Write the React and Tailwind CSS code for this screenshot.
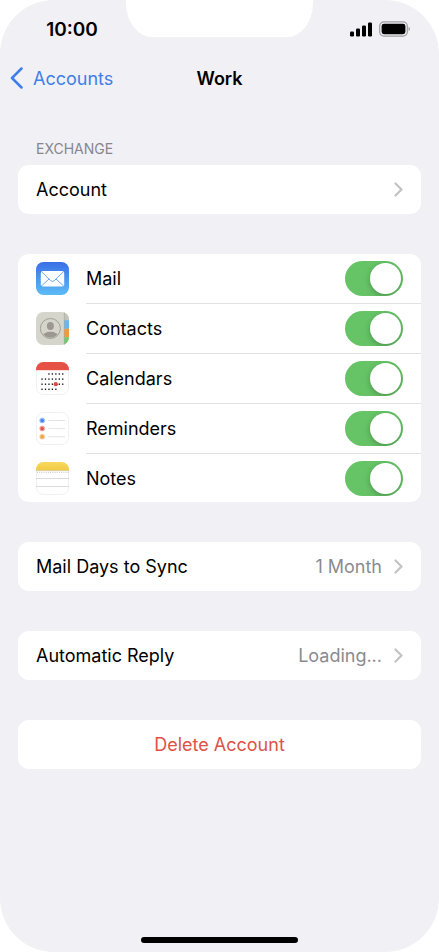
import { useState } from "react";

const services = [
  { id: "mail", label: "Mail", Icon: MailIcon },
  { id: "contacts", label: "Contacts", Icon: ContactsIcon },
  { id: "calendars", label: "Calendars", Icon: CalendarIcon },
  { id: "reminders", label: "Reminders", Icon: RemindersIcon },
  { id: "notes", label: "Notes", Icon: NotesIcon },
];

export default function App() {
  const [enabled, setEnabled] = useState({
    mail: true,
    contacts: true,
    calendars: true,
    reminders: true,
    notes: true,
  });

  const toggle = (id) => setEnabled((prev) => ({ ...prev, [id]: !prev[id] }));

  return (
    <div className="min-h-screen bg-white font-['Inter','Liberation_Sans',sans-serif] text-black">
      <div className="min-h-screen flex flex-col overflow-hidden rounded-[54px] bg-[#f1f0f5]">
        <StatusBar />

        <header className="mt-4 grid grid-cols-[1fr_auto_1fr] items-center px-[10px] h-12">
          <a href="#accounts" className="flex items-center gap-[10px] text-[18px] text-[#3f7fe8]">
            <svg viewBox="0 0 13 22" className="h-[22px] w-[13px]" fill="none" stroke="currentColor" strokeWidth="2.5" strokeLinecap="round" strokeLinejoin="round">
              <path d="M11.5 1.5 2 11l9.5 9.5" />
            </svg>
            Accounts
          </a>
          <h1 className="text-[18px] font-semibold">Work</h1>
        </header>

        <main className="flex flex-col gap-10 px-[18px] pt-[37px]">
          <section>
            <h2 className="mb-[6px] px-[18px] text-[14px] leading-5 text-[#86868b]">EXCHANGE</h2>
            <LinkRow label="Account" />
          </section>

          <ul className="overflow-hidden rounded-[11px] bg-white pl-[18px]">
            {services.map(({ id, label, Icon }) => (
              <li key={id} className="group flex gap-[17px]">
                <div className="shrink-0 pt-2">
                  <Icon />
                </div>
                <div className="flex h-[50px] flex-1 items-center justify-between border-b border-[#e2e2e5] pr-[18px] group-last:h-12 group-last:border-b-0">
                  <label htmlFor={id} className="flex-1 text-[18px]">{label}</label>
                  <Switch id={id} checked={enabled[id]} onChange={() => toggle(id)} />
                </div>
              </li>
            ))}
          </ul>

          <LinkRow label="Mail Days to Sync" value="1 Month" />
          <LinkRow label="Automatic Reply" value="Loading..." />

          <button type="button" className="h-[49px] w-full rounded-[11px] bg-white text-[18px] text-[#de5246]">
            Delete Account
          </button>
        </main>

        <div className="mx-auto mt-auto mb-[9px] h-[6px] w-[157px] rounded-full bg-black" />
      </div>
    </div>
  );
}

function StatusBar() {
  return (
    <div className="grid grid-cols-[1fr_187px_1fr]">
      <div className="flex items-center justify-center pt-[22px] pl-[18px] text-[19px] leading-4 font-semibold">10:00</div>
      <div className="h-[37px] rounded-[0_0_26px_26px/0_0_34px_34px] bg-white" />
      <div className="flex items-center justify-center gap-[6px] pt-5 pl-2">
        <svg viewBox="0 0 23 15" className="h-[15px] w-[23px]">
          <rect x="0" y="9.5" width="4" height="5" rx="1.2" />
          <rect x="6" y="6.5" width="4" height="8" rx="1.2" />
          <rect x="12" y="3.5" width="4" height="11" rx="1.2" />
          <rect x="18" y="0.5" width="4" height="14" rx="1.2" />
        </svg>
        <svg viewBox="0 0 32 16" className="h-4 w-8">
          <rect x="0.7" y="0.9" width="27.6" height="14.2" rx="4.2" fill="none" stroke="#9c9ca1" strokeWidth="1.2" />
          <rect x="2.6" y="2.8" width="23.8" height="10.4" rx="2.4" />
          <path d="M29.6 5.8c1.6.8 1.6 3.6 0 4.4z" fill="#8e8e93" />
        </svg>
      </div>
    </div>
  );
}

function LinkRow({ label, value }) {
  return (
    <a href="#details" className="flex h-[49px] items-center rounded-[11px] bg-white px-[18px] text-[18px]">
      <span className="flex-1">{label}</span>
      {value && <span className="text-[#8b8b8f]">{value}</span>}
      <svg viewBox="0 0 9 15" className="ml-3 h-[15px] w-[9px]" fill="none" stroke="#c3c3c6" strokeWidth="2.2" strokeLinecap="round" strokeLinejoin="round">
        <path d="M1.5 1.5 7.5 7.5l-6 6" />
      </svg>
    </a>
  );
}

function Switch({ id, checked, onChange }) {
  return (
    <input
      id={id}
      type="checkbox"
      role="switch"
      checked={checked}
      onChange={onChange}
      className="flex h-[35px] w-[58px] cursor-pointer appearance-none items-center overflow-hidden rounded-full bg-[#e9e9eb] p-[2px] before:h-[31px] before:w-[31px] before:rounded-full before:bg-white before:shadow-[0_2px_6px_rgba(0,0,0,0.25)] before:content-[''] checked:justify-end checked:bg-[#66c466]"
    />
  );
}

function MailIcon() {
  return (
    <svg viewBox="0 0 33 33" className="h-[33px] w-[33px]">
      <defs>
        <linearGradient id="mail-bg" x1="0" y1="0" x2="0" y2="1">
          <stop offset="0" stopColor="#3a6fe6" />
          <stop offset="1" stopColor="#5cbcf6" />
        </linearGradient>
      </defs>
      <rect width="33" height="33" rx="7.5" fill="url(#mail-bg)" />
      <rect x="4.8" y="9" width="23.4" height="15.6" rx="2" fill="#fff" />
      <g fill="none" stroke="#5b9cf0" strokeWidth="0.9">
        <path d="M5.4 9.6 14.6 18.6q1.9 1.7 3.8 0L27.6 9.6" />
        <path d="m5.4 24 7.8-7.2M27.6 24l-7.8-7.2" />
      </g>
    </svg>
  );
}

function ContactsIcon() {
  return (
    <svg viewBox="0 0 33 33" className="h-[33px] w-[33px]">
      <defs>
        <clipPath id="contacts-clip"><rect width="33" height="33" rx="7.5" /></clipPath>
        <clipPath id="contacts-face"><circle cx="14.4" cy="16.5" r="9.3" /></clipPath>
      </defs>
      <g clipPath="url(#contacts-clip)">
        <rect width="33" height="33" fill="#d5d5cb" />
        <rect x="28" width="5" height="8.2" fill="#c4c4bb" />
        <rect x="28" y="8.2" width="5" height="8.6" fill="#6cb6ec" />
        <rect x="28" y="16.8" width="5" height="8.4" fill="#f09a3c" />
        <rect x="28" y="25.2" width="5" height="7.8" fill="#72cc66" />
        <path d="M28.3 0v33" stroke="#a9a9a1" strokeWidth="0.7" />
        <g clipPath="url(#contacts-face)" fill="#9d9791">
          <ellipse cx="14.4" cy="14" rx="3.5" ry="4.1" />
          <ellipse cx="14.4" cy="24.6" rx="8" ry="4.8" />
        </g>
        <circle cx="14.4" cy="16.5" r="10" fill="none" stroke="#9d9791" strokeWidth="0.9" />
      </g>
    </svg>
  );
}

function CalendarIcon() {
  // first and last column of each week row
  const weeks = [[2, 6], [0, 6], [0, 6], [0, 4]];
  return (
    <svg viewBox="0 0 33 33" className="h-[33px] w-[33px]">
      <defs>
        <clipPath id="calendar-clip"><rect width="33" height="33" rx="7.5" /></clipPath>
      </defs>
      <rect x="0.5" y="0.5" width="32" height="32" rx="7" fill="#fff" stroke="#f0f0f2" />
      <rect width="33" height="8.2" fill="#e65145" clipPath="url(#calendar-clip)" />
      {weeks.map(([from, to], row) =>
        Array.from({ length: to - from + 1 }, (_, i) => (
          <rect key={`${row}-${i}`} x={5.4 + (from + i) * 3.45} y={11.3 + row * 5.1} width="1.3" height="1.4" fill="#111" />
        ))
      )}
      <circle cx="19.8" cy="22.2" r="2.1" fill="#e2473d" />
    </svg>
  );
}

function RemindersIcon() {
  return (
    <svg viewBox="0 0 33 33" className="h-[33px] w-[33px]">
      <rect x="0.5" y="0.5" width="32" height="32" rx="7" fill="#fff" stroke="#f0f0f2" />
      {["#3f80e8", "#df5047", "#eda03f"].map((color, i) => (
        <g key={color}>
          <circle cx="6.2" cy={8.5 + i * 8.1} r="2.5" fill={color} fillOpacity="0.5" stroke={color} strokeOpacity="0.3" />
          <circle cx="6.2" cy={8.5 + i * 8.1} r="1.6" fill={color} />
          <path d={`M12.3 ${8.5 + i * 8.1}H29`} stroke="#dcdcde" strokeWidth="0.8" />
        </g>
      ))}
    </svg>
  );
}

function NotesIcon() {
  return (
    <svg viewBox="0 0 33 33" className="h-[33px] w-[33px]">
      <defs>
        <clipPath id="notes-clip"><rect width="33" height="33" rx="7.5" /></clipPath>
        <linearGradient id="notes-top" x1="0" y1="0" x2="0" y2="1">
          <stop offset="0" stopColor="#f8d95c" />
          <stop offset="1" stopColor="#f2ca45" />
        </linearGradient>
      </defs>
      <rect x="0.5" y="0.5" width="32" height="32" rx="7" fill="#fff" stroke="#f0f0f2" />
      <g clipPath="url(#notes-clip)">
        <rect width="33" height="8.3" fill="url(#notes-top)" />
        <path d="M0 8.6h33" stroke="#c9b472" strokeWidth="0.6" />
        <path d="M1 10.3h32" stroke="#b5b5b5" strokeWidth="0.9" strokeDasharray="0.9 1.3" />
        <path d="M0 16.5h33M0 24.5h33" stroke="#d2d2d4" strokeWidth="0.8" />
      </g>
    </svg>
  );
}
